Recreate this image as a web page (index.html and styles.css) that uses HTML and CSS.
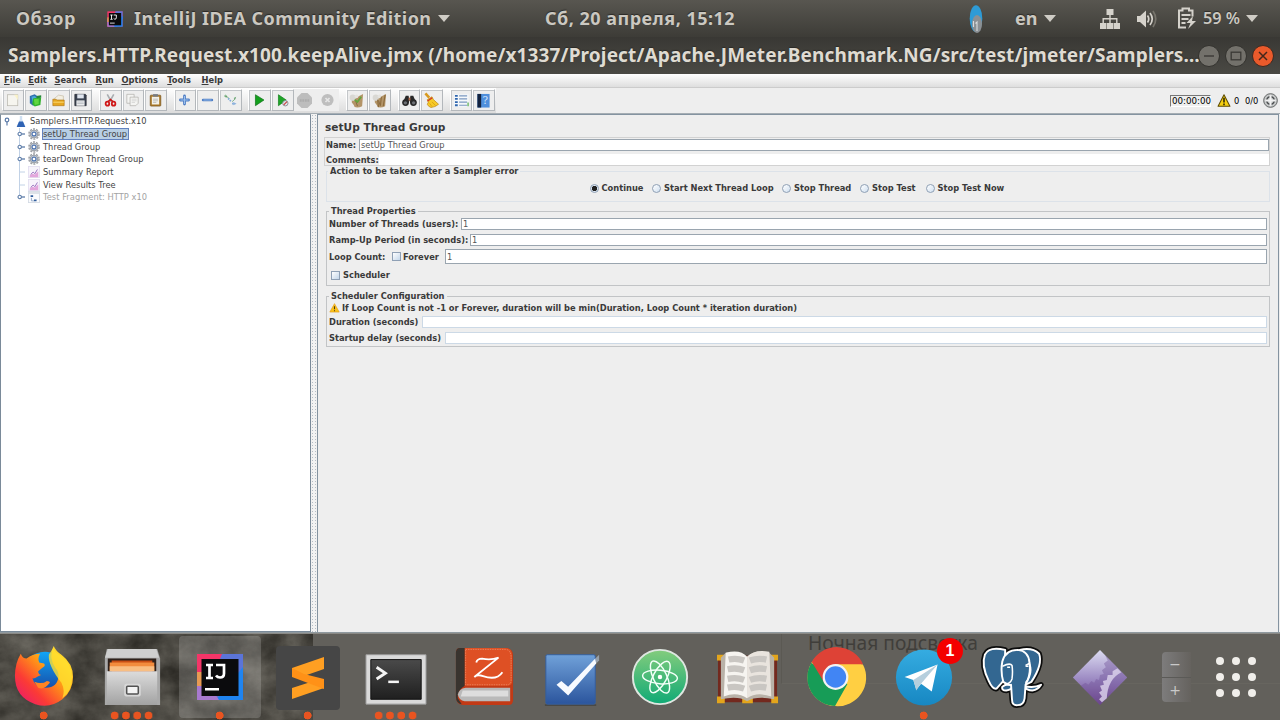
FILE: index.html
```html
<!DOCTYPE html>
<html lang="ru">
<head>
<meta charset="utf-8">
<title>Apache JMeter</title>
<link rel="stylesheet" href="styles.css">
</head>
<body>
<header class="shell">
  <div class="topbar">
    <span class="overview">Обзор</span>
    <svg class="app-ico" viewBox="0 0 48 48"><use href="#ij"/></svg>
    <span class="app-name">IntelliJ IDEA Community Edition</span>
    <i class="caret"></i>
    <span class="clock">Сб, 20 апреля, 15:12</span>
    <svg class="pill" viewBox="0 0 14 28"><ellipse cx="7" cy="13.5" rx="6.3" ry="13.3" fill="#2e9bd6"/><ellipse cx="8" cy="19" rx="5" ry="9" fill="#8b9094"/><path d="M4.500 22V16M8 26V17l-1.500 1.500" stroke="#d9dcdd" stroke-width="1.100" fill="none"/></svg>
    <span class="lang">en</span>
    <i class="caret c2"></i>
    <svg class="net" viewBox="0 0 20 20"><g fill="#d5d2cb"><path d="M6.500 0h7v6h-7zM0 14h6.500v6H0zM7 14h6v6H7zM13.500 14H20v6h-6.500zM9.300 6h1.400v3.500H9.300zM2.500 9h15v1.400h-15zM2.500 9h1.400v5H2.500zM9.300 9h1.400v5H9.300zM16.100 9h1.400v5h-1.400z"/></g></svg>
    <svg class="vol" viewBox="0 0 20 20"><path d="M0 7h3l6-5.500v17L3 13H0z" fill="#d5d2cb"/><g fill="none" stroke="#d5d2cb" stroke-width="1.700"><path d="M10.500 6.500q2.500 3.500 0 7"/><path d="M13 4q4.500 6 0 12"/><path d="M16 2q5.500 8 0 16" stroke="#77746c"/></g></svg>
    <svg class="bat" viewBox="0 0 20 22"><path d="M15.500 9.500V3.500H12V1.500H5.500v2H2v17h7" fill="none" stroke="#d5d2cb" stroke-width="2"/><path d="M4.500 7h9v2h-9zM4.500 11h7v2h-7zM4.500 15h4v2h-4z" fill="#d5d2cb"/><path d="M16 9l-6.500 7h4l-2.500 6 8-8h-4z" fill="#d5d2cb"/></svg>
    <span class="pct">59 %</span>
    <i class="caret c3"></i>
  </div>
  <div class="titlebar">
    <span class="wtitle">Samplers.HTTP.Request.x100.keepAlive.jmx (/home/x1337/Project/Apache.JMeter.Benchmark.NG/src/test/jmeter/Samplers…</span>
    <div class="wbtns">
      <svg viewBox="0 0 22 22"><circle cx="11" cy="11" r="10.500" fill="#73716b" stroke="#33322e"/><path d="M6 11h10" stroke="#3a3935" stroke-width="1.400"/></svg>
      <svg viewBox="0 0 22 22"><circle cx="11" cy="11" r="10.500" fill="#73716b" stroke="#33322e"/><rect x="6.200" y="7.200" width="9.600" height="7.600" fill="none" stroke="#3a3935" stroke-width="1.300"/></svg>
      <svg viewBox="0 0 22 22"><circle cx="11" cy="11" r="10.500" fill="#ea5a2b" stroke="#3b2a22"/><path d="M7 7l8 8M15 7l-8 8" stroke="#43261b" stroke-width="1.500"/></svg>
    </div>
  </div>
</header>

<nav class="menubar">
  <span><u>F</u>ile</span><span><u>E</u>dit</span><span><u>S</u>earch</span><span><u>R</u>un</span><span><u>O</u>ptions</span><span><u>T</u>ools</span><span><u>H</u>elp</span>
</nav>

<div class="toolbar">
  <div class="tools">
    <div class="grp">
      <b><svg viewBox="0 0 16 16"><rect x="2" y="1.500" width="12.500" height="13.500" fill="#f6f5ef" stroke="#b9b7ae" stroke-width=".9"/><path d="M10 1.500h4.500V8z" fill="#fbf3c8"/></svg></b>
      <b><svg viewBox="0 0 16 16"><path d="M1 3l6-2 3 2v10l-5 2-4-3z" fill="#2f6fae"/><path d="M3 4l4-1 2 2v7l-4 1z" fill="#49a8d8"/><path d="M5 6l6-1 4 0-1 9-7 2-3-3z" fill="#31b22c"/><path d="M6 7l6-1v7l-5 1z" fill="#5fd63f"/><path d="M9 3l6-1v3l-5 1z" fill="#24873a"/></svg></b>
      <b><svg viewBox="0 0 16 16"><path d="M3 6l5-4 6 1v6H3z" fill="#f3efe2" stroke="#b5a88a" stroke-width=".6"/><path d="M1 7h4l1 1h9v7H1z" fill="#e6a721" stroke="#a76d10" stroke-width=".7"/><path d="M1.500 10h13v1.500h-13z" fill="#f6cf62"/></svg></b>
      <b><svg viewBox="0 0 16 16"><path d="M1 1h13l1 1v13H1z" fill="#3a4250" stroke="#20242c" stroke-width=".8"/><path d="M4 1h8v5H4z" fill="#dfe5ee"/><path d="M3 8.500h10V15H3z" fill="#f2f3f4"/><path d="M4 10.500h8M4 12.500h8" stroke="#9aa0a8" stroke-width=".8"/></svg></b>
    </div>
    <div class="grp">
      <b><svg viewBox="0 0 16 16"><path d="M4 1l5 9M12 1L7 10" stroke="#a9adb1" stroke-width="2"/><g fill="none" stroke="#d01818" stroke-width="2.200"><ellipse cx="4.200" cy="12.500" rx="2.200" ry="2.500"/><ellipse cx="11.800" cy="12.500" rx="2.200" ry="2.500"/></g><path d="M5 10l3-2.500L11 10" stroke="#c81616" stroke-width="2" fill="none"/></svg></b>
      <b><svg viewBox="0 0 16 16"><g fill="#f4f4f2" stroke="#aaa9a4" stroke-width=".8"><path d="M1 1h9v11H1z"/><path d="M5 4.500h10V12l-3 3H5z"/></g><path d="M7 7h6M7 9h6M7 11h4" stroke="#c4c4c4" stroke-width=".7"/></svg></b>
      <b><svg viewBox="0 0 16 16"><rect x="1.500" y="2" width="13" height="13.500" rx="1" fill="#ad7c2b" stroke="#704c14" stroke-width=".8"/><path d="M3.500 4h9v9.500h-9z" fill="#f3f1e9"/><rect x="5" y=".8" width="6" height="3" fill="#777b82"/><path d="M5 7h6M5 9h6M5 11h4" stroke="#a7a7a7" stroke-width=".8"/></svg></b>
    </div>
    <div class="grp">
      <b><svg viewBox="0 0 16 16"><path d="M8 3v10M3 8h10" stroke="#4d7cc4" stroke-width="3.400" stroke-linecap="round"/><path d="M8 3v10M3 8h10" stroke="#9cc0ec" stroke-width="1.300"/></svg></b>
      <b><svg viewBox="0 0 16 16"><path d="M2.500 8h11" stroke="#4d7cc4" stroke-width="3" stroke-linecap="round"/><path d="M3 8h10" stroke="#9cc0ec" stroke-width="1.100"/></svg></b>
      <b><svg viewBox="0 0 16 16"><path d="M0 3l3 .5M3.500 3.500l3 3M10 10l4-3.500" stroke="#7fb085" stroke-width="1.200"/><path d="M2 1l2.500 4-3-.5zM15 4l-3 1.500 1.500 2z" fill="#5f9f68"/><path d="M5 6l4 4M10 12.500h3" stroke="#7ba6da" stroke-width="2" stroke-dasharray="2 1"/><path d="M11.500 10.500l4 2-4 2z" fill="#8cb2dd"/></svg></b>
    </div>
    <div class="grp">
      <b><svg viewBox="0 0 16 16"><path d="M3 1.500L13.500 8 3 15z" fill="#13a01c" stroke="#0b6c14" stroke-width=".8"/></svg></b>
      <b><svg viewBox="0 0 16 16"><path d="M3 1.500L12.500 8 3 15z" fill="#1fa428" stroke="#0b7c14" stroke-width=".8"/><circle cx="11.500" cy="12" r="3.300" fill="#dfe3e8" stroke="#7d8289"/><path d="M9.500 14l4-4" stroke="#c33" stroke-width="1.300"/></svg></b>
      <b class="off"><svg class="wide" viewBox="0 0 16 16"><path d="M4.800 0h6.400L16 4.800v6.400L11.200 16H4.800L0 11.200V4.800z" fill="#bdbdbd"/><path d="M3 8h10" stroke="#acacac" stroke-width="2.500" stroke-dasharray="2 .7"/></svg></b>
      <b class="off"><svg viewBox="0 0 16 16"><circle cx="8" cy="8" r="7.500" fill="#bebebe"/><path d="M5.500 5.500l5 5M10.500 5.500l-5 5" stroke="#e6e6e6" stroke-width="2"/></svg></b>
    </div>
    <div class="grp">
      <b><svg class="wide" viewBox="0 0 16 16"><use href="#broom"/><path d="M6 7l3 2.500L13 4" stroke="#63a53c" stroke-width="1.800" fill="none"/></svg></b>
      <b><svg class="wide" viewBox="0 0 16 16"><use href="#broom"/><path d="M6 7l1 8M10 4l-1 9M14 2l-2 12" stroke="#8c6b3b" stroke-width="1.200"/></svg></b>
    </div>
    <div class="grp">
      <b><svg class="wide" viewBox="0 0 16 16"><g fill="#292929"><path d="M4 3h3l1 5-1 2H1z"/><path d="M12 3H9L8 8l1 2h6z"/><circle cx="3.800" cy="10.200" r="3.600"/><circle cx="12.200" cy="10.200" r="3.600"/></g><g fill="#6d7075"><circle cx="3.600" cy="10.500" r="1.800"/><circle cx="12.400" cy="10.500" r="1.800"/></g><path d="M7 5h2v3H7z" fill="#b06a4c"/></svg></b>
      <b><svg class="wide" viewBox="0 0 16 16"><path d="M1.500 .5L5.500 5" stroke="#d89a1f" stroke-width="2.800"/><path d="M3.500 7l5-3 1.500 3 5.500 5q-3 3-8 3.500-3-1-4-3.500l1-2z" fill="#f7ca27" stroke="#b78210" stroke-width=".7"/><path d="M3.800 8.500l5-3.500" stroke="#d2332b" stroke-width="1.400"/><path d="M6 11l2.500 3.500M8.500 9.500l4 4" stroke="#d49a12" stroke-width=".8"/></svg></b>
    </div>
    <div class="grp">
      <b><svg class="wide" viewBox="0 0 16 16"><path d="M0 1.500h15.500v13H0z" fill="#f5f8fb"/><path d="M1 3h3M1 6.300h3M1 9.700h3M1 13h3" stroke="#2f66ae" stroke-width="2"/><path d="M5.500 3H14M5.500 6.300H14M5.500 9.700H14M5.500 13H14" stroke="#7b97c0" stroke-width="1.200"/><path d="M15 10v4" stroke="#49a841" stroke-width="1.200"/></svg></b>
      <b><svg class="wide" viewBox="0 0 16 16"><path d="M1.500 1h13v14.500h-13z" fill="#4f8fdc"/><path d="M1.500 1h4v14.500h-4z" fill="#14233f"/><text x="10" y="12" class="q">?</text></svg></b>
    </div>
  </div>
  <div class="status">
    <span class="timer">00:00:00</span>
    <svg class="warn" viewBox="0 0 16 16"><use href="#warn"/></svg>
    <span class="s0">0</span><span class="s1">0/0</span>
    <svg class="cross" viewBox="0 0 16 16"><circle cx="8" cy="8" r="7.300" fill="#c4c6c6" stroke="#5e6161"/><circle cx="8" cy="8" r="4" fill="none" stroke="#4c4f51" stroke-width="1.600"/><path d="M8 2.500v11M2.500 8h11" stroke="#f2f2f2" stroke-width="2.200"/></svg>
  </div>
</div>

<main class="work">
  <aside class="tree">
    <div class="row root"><svg class="hnd" viewBox="0 0 8 12"><circle cx="4" cy="5" r="1.800" fill="#fff" stroke="#5b7ba8" stroke-width="1.200"/><path d="M4 7v3.500" stroke="#5b7ba8" stroke-width="1.200"/></svg><svg class="ti" viewBox="0 0 12 12"><path d="M4.800 1h2.400v3.500L10 11H2l2.800-6.500z" fill="#cfe0f2"/><path d="M4 6.500h4L10.300 12H1.700z" fill="#2f63b4"/></svg><span>Samplers.HTTP.Request.x10</span></div>
    <div class="row"><svg class="hnd"><use href="#hnd"/></svg><svg class="ti" viewBox="0 0 14 14"><use href="#gear"/></svg><span class="sel">setUp Thread Group</span></div>
    <div class="row"><svg class="hnd"><use href="#hnd"/></svg><svg class="ti" viewBox="0 0 14 14"><use href="#gear"/></svg><span>Thread Group</span></div>
    <div class="row"><svg class="hnd"><use href="#hnd"/></svg><svg class="ti" viewBox="0 0 14 14"><use href="#gear"/></svg><span>tearDown Thread Group</span></div>
    <div class="row"><svg class="hnd"><use href="#leaf"/></svg><svg class="ti" viewBox="0 0 14 14"><use href="#chart"/></svg><span>Summary Report</span></div>
    <div class="row"><svg class="hnd"><use href="#leaf"/></svg><svg class="ti" viewBox="0 0 14 14"><use href="#chart"/></svg><span>View Results Tree</span></div>
    <div class="row last"><svg class="hnd"><use href="#hnd"/></svg><svg class="ti" viewBox="0 0 14 14"><rect x=".5" y=".5" width="13" height="13" fill="#fafbfd" stroke="#d3dae4"/><path d="M1 1h12v2.500H1z" fill="#dde2e8"/><path d="M3 5h3v2H3zM7 10h3v2H7z" fill="#315e9d"/><path d="M4 8v3.500h3" stroke="#8ba3c4" fill="none"/></svg><span class="dis">Test Fragment: HTTP x10</span></div>
  </aside>
  <div class="split"></div>
  <section class="form">
    <h1>setUp Thread Group</h1>
    <div class="namebox">
      <div class="line nm"><label>Name:</label><div class="inp">setUp Thread Group</div></div>
      <div class="line cm"><label>Comments:</label><div class="plain"></div></div>
    </div>
    <fieldset class="action"><legend>Action to be taken after a Sampler error</legend>
      <div class="radios">
        <span><i class="on"></i>Continue</span><span><i></i>Start Next Thread Loop</span><span><i></i>Stop Thread</span><span><i></i>Stop Test</span><span><i></i>Stop Test Now</span>
      </div>
    </fieldset>
    <fieldset class="props"><legend>Thread Properties</legend>
      <div class="line p1"><label>Number of Threads (users):</label><div class="inp">1</div></div>
      <div class="line p2"><label>Ramp-Up Period (in seconds):</label><div class="inp">1</div></div>
      <div class="line p3"><label>Loop Count:</label><i class="chk"></i><label class="fv">Forever</label><div class="inp">1</div></div>
      <div class="line p4"><i class="chk"></i><label>Scheduler</label></div>
    </fieldset>
    <fieldset class="sched"><legend>Scheduler Configuration</legend>
      <div class="line w"><svg viewBox="0 0 16 16"><path d="M8 1l7.500 13.500H.5z" fill="#fbc319" stroke="#e59a10" stroke-linejoin="round"/><path d="M8 5v5M8 11.500v1.700" stroke="#4b3a10" stroke-width="1.700"/></svg><label>If Loop Count is not -1 or Forever, duration will be min(Duration, Loop Count * iteration duration)</label></div>
      <div class="line d"><label>Duration (seconds)</label><div class="inp lite"></div></div>
      <div class="line st"><label>Startup delay (seconds)</label><div class="inp lite"></div></div>
    </fieldset>
  </section>
</main>

<footer class="dock">
  <svg class="rock" viewBox="0 0 313 87" preserveAspectRatio="none"><filter id="rk" x="0" y="0" width="100%" height="100%" color-interpolation-filters="sRGB"><feTurbulence type="fractalNoise" baseFrequency=".03 .035" numOctaves="6" seed="8"/><feColorMatrix values=".34 0 0 0 .125  .335 0 0 0 .118  .32 0 0 0 .1  0 0 0 0 1"/></filter><rect width="313" height="87" filter="url(#rk)"/></svg>
  <div class="behind"><span>Ночная подсветка</span></div>
  <div class="apps">
    <div class="app"><svg viewBox="0 0 64 64"><defs><linearGradient id="ff" x1="1" y1="0" x2="0" y2="1"><stop offset=".1" stop-color="#ffe92f"/><stop offset=".42" stop-color="#ff9a16"/><stop offset=".7" stop-color="#fb3b35"/><stop offset="1" stop-color="#e4127c"/></linearGradient><linearGradient id="fb" x1="0" y1="0" x2="0" y2="1"><stop offset="0" stop-color="#10a5f5"/><stop offset="1" stop-color="#183795"/></linearGradient></defs><circle cx="33" cy="30" r="24" fill="url(#fb)"/><path d="M8 8q2 5 6 5 6-5 14-5-3 5-1 9l5 1q2 2-1 4l-5 4q0 3 3 4-3 1-6 3-3 1-3 0 2 9 12 10 14 1 15-12 0-5-3-8Q36 11 42 0q2 5 8 9 12 9 12 23 0 14-11 23-13 10-28 5Q2 53 2 31 2 18 8 8z" fill="url(#ff)"/><path d="M42 1q0 5 7 9 12 9 12 22 0 15-10 22 3-8-1-16Q36 20 37 9z" fill="#ffe02f" opacity=".8"/><path d="M22 37q8 3 13-1 3 0 3 2-6 8-12 5z" fill="#ff8423"/></svg><em class="n1"></em></div>
    <div class="app"><svg viewBox="0 0 64 64"><defs><linearGradient id="cab" x1="0" y1="0" x2="0" y2="1"><stop offset="0" stop-color="#dcdcdc"/><stop offset="1" stop-color="#a2a2a2"/></linearGradient></defs><path d="M6 3h52l3 10v48H4V13z" fill="#a9a9a9"/><path d="M7 3h50l3 9H4z" fill="#cfcfcf"/><path d="M7 13h50v14H7z" fill="#2e211b"/><path d="M11 15h42v12H11z" fill="#c94f15"/><path d="M9 17h46v9H9z" fill="#f28c3d"/><path d="M9 21h46v5H9z" fill="#f8be83"/><path d="M6 26h52v35H6z" fill="url(#cab)"/><rect x="24" y="39" width="17" height="13" rx="2" fill="#d8d8d8"/><rect x="26.500" y="41.500" width="12" height="8" rx="1" fill="#f3f3f3" stroke="#525252" stroke-width="1.600"/></svg><em class="n4"></em></div>
    <div class="app active"><svg class="s48" viewBox="0 0 48 48"><g id="ij"><path d="M1 1h46v46H1z" fill="#f43568"/><path d="M26 1h21v22L30 47H7z" fill="#5b74d8"/><path d="M47 14v33H20z" fill="#1f84f0"/><path d="M1 25h8l14 22H1z" fill="#a879cf"/><path d="M1 19h6v14H1z" fill="#e79a53"/><path d="M5.500 6h37v37h-37z" fill="#0b0b0d"/><path d="M10 12h7M13.500 12v12M10 25h7M20 12h8v8.500q0 4-4 4-2.500 0-4-2" fill="none" stroke="#fff" stroke-width="2.700"/><path d="M9 35h14v2.500H9z" fill="#fff"/></g></svg><em class="n1"></em></div>
    <div class="app"><svg class="s64" viewBox="0 0 64 64"><rect width="64" height="64" rx="4" fill="#464646"/><path d="M16 22l32-11v12l-20 7-12-1z" fill="#ff9f22"/><path d="M16 42v11l32-11v-9l-4 0z" fill="#ff9f22"/><path d="M16 22v9l32 12v-10L28 28z" fill="#ff9117"/></svg><em class="n1"></em></div>
    <div class="app"><svg viewBox="0 0 64 64"><defs><linearGradient id="trm" x1="0" y1="0" x2="0" y2="1"><stop offset="0" stop-color="#4a4a4a"/><stop offset="1" stop-color="#1f1f1f"/></linearGradient></defs><path d="M1 9h62v51H1z" fill="#dadada" stroke="#9a9a9a"/><path d="M6 14h52v41H6z" fill="url(#trm)" stroke="#111"/><path d="M12 22l9 6-9 6" fill="none" stroke="#f5f5f5" stroke-width="3"/><path d="M24 37h11" stroke="#f5f5f5" stroke-width="2.600"/></svg><em class="n4"></em></div>
    <div class="app"><svg viewBox="0 0 64 64"><path d="M7 2h47q8 0 8 8v46q0 5-5 5H10q-7-1-7-9V7q0-5 4-5z" fill="#c23a16"/><path d="M12 2h42q7 0 7 8v26q0 5-5 5H12z" fill="#de5024"/><path d="M7 2h5v39q-8 5-7 13l4 6Q3 59 3 52V7q0-5 4-5z" fill="#39342f"/><path d="M13 43h46v14H12q-6-1-7-7 1-6 8-7z" fill="#b9b9b9"/><path d="M10 46h47v6H8z" fill="#ececec" opacity=".7"/><path d="M13 3.500h41q5 0 6 7v25q0 4-4 4.500H13z" fill="none" stroke="#f3a07d" stroke-width=".6" stroke-dasharray="1.500 1"/><path d="M24 17q1-4 6-4 9 2 17-1L22 32q3-3 9-1 14 5 20-4" fill="none" stroke="#fff" stroke-width="1.900"/></svg></div>
    <div class="app"><svg viewBox="0 0 64 64"><defs><linearGradient id="tk" x1="0" y1="0" x2="0" y2="1"><stop offset="0" stop-color="#70a1d9"/><stop offset="1" stop-color="#2b559d"/></linearGradient></defs><path d="M4 60h53v2H4z" fill="#4a4946"/><rect x="5" y="9" width="51" height="51" rx="1.500" fill="url(#tk)" stroke="#355e9d"/><path d="M16 40l5-4 7 6L56 13l1 5-29 33z" fill="#f7faff"/><path d="M56 13l4-4v6l-3 3z" fill="#b9c9de" opacity=".6"/></svg></div>
    <div class="app"><svg viewBox="0 0 64 64"><defs><linearGradient id="at" x1="0" y1="0" x2="0" y2="1"><stop offset="0" stop-color="#83cc7d"/><stop offset="1" stop-color="#10aa75"/></linearGradient></defs><circle cx="32" cy="32" r="28" fill="url(#at)" stroke="#dfe7e1" stroke-width="2"/><g fill="none" stroke="#f2fff8" stroke-width="1.500"><ellipse cx="32" cy="32" rx="18" ry="7" transform="rotate(5 32 32)"/><ellipse cx="32" cy="32" rx="18" ry="7" transform="rotate(65 32 32)"/><ellipse cx="32" cy="32" rx="18" ry="7" transform="rotate(118 32 32)"/></g><circle cx="32" cy="32" r="2.300" fill="#fff"/></svg></div>
    <div class="app"><svg viewBox="0 0 64 64"><path d="M1 10h61v48H1z" fill="#73291e"/><g fill="#e3a51c"><path d="M0 9h8v6H0zM56 9h7v6h-7zM0 52h8v7H0zM56 52h7v7h-7zM26 54h11v5H26z"/></g><path d="M4 12l5-5q14-3 22 4 9-8 23-4l5 5v43q-18-4-28 2-9-6-27-2z" fill="#b9b2a8"/><path d="M9 7q15-4 22 4v43Q21 47 7 52z" fill="#f6f4f0"/><path d="M54 6q-15-3-23 5v43q10-7 25-2z" fill="#e9e4de"/><g stroke="#c9c6c2" stroke-width="6.500"><path d="M12 14q8-2 16 1M11 24q9-2 17 1M11 34q9-2 17 1M11 43q9-2 17 1M34 15q8-3 17-1M34 25q8-3 17-1M34 35q8-3 17-1M34 44q8-3 17-1" fill="none"/></g></svg></div>
    <div class="app"><svg viewBox="0 0 64 64"><circle cx="32" cy="32.500" r="29.500" fill="#ffcd40"/><path d="M32 32.500L6.500 17.500a29.500 29.500 0 0 0 25.500 44.500l13-22z" fill="#179c57"/><path d="M32 19h28A29.500 29.500 0 0 0 7 16.500L20 38z" fill="#de4236"/><path d="M59.800 19H32l12 20-13 23a29.500 29.500 0 0 0 28.800-43z" fill="#ffcf42"/><circle cx="31.500" cy="32" r="13.300" fill="#f3f3f3"/><circle cx="31.500" cy="32" r="11" fill="#4185f4"/></svg></div>
    <div class="app"><svg viewBox="0 0 64 64"><defs><linearGradient id="tg" x1="0" y1="0" x2="0" y2="1"><stop offset="0" stop-color="#35ace1"/><stop offset="1" stop-color="#1787c2"/></linearGradient></defs><circle cx="32" cy="32.500" r="29" fill="url(#tg)"/><path d="M12 32l34-13-6 28-11-8-5 6-3-10z" fill="#fff"/><path d="M21 35l25-16-18 21-4 6z" fill="#b6cfdd"/></svg><strong>1</strong><em class="n1"></em></div>
    <div class="app"><svg viewBox="0 0 64 64"><defs><g id="eleph"><path d="M25 4Q8 0 4 9 0 20 8 36q4 9 8 8l8-9z"/><path d="M40 4q13-3 20 4 4 11-8 29l-6 3z"/><path d="M22 42q5-4 11-1-1 4-7 5-5 0-4-4zM44 41q10 3 18-1-3 5-9 6-6 0-9-5z"/><path d="M22 16q3-12 16-12 11 1 12 13 2 12-4 23l-1 14q-1 7-7 7-6 1-6-6l-1-15q-2 1-8-3-3-10-1-21z"/></g></defs><use href="#eleph" fill="#0c0c0c" stroke="#0c0c0c" stroke-width="5.500" stroke-linejoin="round"/><use href="#eleph" fill="#336791" stroke="#fff" stroke-width="2" stroke-linejoin="round"/><path d="M22 21q8-4 10-1 1 6 0 14-2 5-6 5M46 20l4-2q4 10-4 20" fill="none" stroke="#fff" stroke-width="1.600"/><path d="M27 22h3M46 21h3" stroke="#fff" stroke-width="1.600"/></svg></div>
    <div class="app"><svg viewBox="0 0 64 64"><defs><linearGradient id="dm" x1="0" y1="0" x2="0" y2="1"><stop offset="0" stop-color="#dcdcf2"/><stop offset=".55" stop-color="#9a87c1"/><stop offset="1" stop-color="#6a3f86"/></linearGradient></defs><path d="M32 4l28 28.500L32 61 4 32.500z" fill="url(#dm)"/><path d="M37 9L60 32.500 32 61 12 41l5-3 3 2 3-4 3 2 2-4 3 1 1-5 4-1-2-4 4-3-2-4 4-3z" fill="#6f5197" opacity=".4"/><path d="M50 23l4 4q-14 7-15 27l-5 4-3-3 3-3-3-4 3-2-2-5 4-1-1-4 4-1 1-5 5 0 0-4z" fill="#ddd5ee" opacity=".8"/></svg></div>
    <div class="pager"><span>−</span><span>+</span></div>
    <div class="grid9"><i></i><i></i><i></i><i></i><i></i><i></i><i></i><i></i><i></i></div>
  </div>
</footer>

<svg class="defs" aria-hidden="true">
  <defs>
    <g id="warn"><path d="M8 1l7.300 14H.7z" fill="#f5cf10" stroke="#5e4c05" stroke-width="1.300" stroke-linejoin="round"/><path d="M8 4.500v6M8 11.800v2" stroke="#332b08" stroke-width="2"/></g>
    <g id="hnd"><path d="M4 6h4" stroke="#5b7ba8" stroke-width="1.300"/><circle cx="2.700" cy="6" r="1.700" fill="#fff" stroke="#5b7ba8" stroke-width="1.100"/></g>
    <g id="leaf"><path d="M3 6h5" stroke="#c2d2e6" stroke-width="1"/></g>
    <g id="gear"><circle cx="7" cy="7" r="5.900" fill="none" stroke="#9c9fa4" stroke-width="1.700" stroke-dasharray="2.400 1.300"/><circle cx="7" cy="7" r="4.500" fill="#ccd2da" stroke="#888d95" stroke-width="1"/><circle cx="7" cy="7" r="2.300" fill="#fff" stroke="#4f75b0" stroke-width="1.400"/></g>
    <g id="chart"><rect x=".5" y=".5" width="13" height="13" fill="#f7f4fb" stroke="#e2dff0"/><path d="M2 13V11l3-2 3 1 4-4v7z" fill="#e3a6dc"/><path d="M3 10l3-3 2 2 3-5" fill="none" stroke="#8d62b8"/></g>
    <g id="broom"><path d="M3 4q3 1 6 0l4-2 2-1-1 13q-4 2-8 1-1-3-3-5z" fill="#b39468"/><circle cx="4" cy="5" r="3.300" fill="#d9d8d4"/><circle cx="8" cy="3.500" r="2" fill="#e4e3e0"/><path d="M7 8l2 6" stroke="#86683f"/></g>
  </defs>
</svg>
</body>
</html>
```
FILE: styles.css
```css
* { box-sizing: border-box; }
body {
  margin: 0; width: 1280px; height: 720px; overflow: hidden;
  display: flex; flex-direction: column;
  background: #eee; color: #3a3a3a;
  font: bold 8.3px/10px "DejaVu Sans", sans-serif;
}
svg { display: block; flex: none; overflow: visible; }
.defs { position: absolute; width: 0; height: 0; }
i, em, b { font-style: normal; flex: none; }

.shell { height: 74px; flex: none; font-family: "Noto Sans", sans-serif; color: #dfdbd2; text-shadow: 0 -1px 1px #2b2a27; }
.topbar {
  height: 37px; display: flex; align-items: center;
  background: linear-gradient(#585650, #3d3c37);
  font-size: 18px; font-weight: 700; line-height: 24px; white-space: nowrap; color: #cbc8c1;
}
.topbar > * { flex: none; }
.topbar > span { margin-top: -1px; }
.overview { width: 107px; padding-left: 16px; letter-spacing: .6px; }
.app-ico { width: 16px; height: 16px; }
.app-name { margin-left: 11px; width: 298px; letter-spacing: .44px; }
.caret { width: 0; height: 0; border: 6px solid transparent; border-top: 7px solid #cfccc5; border-bottom: 0; margin-left: 6px; }
.clock { margin-left: 95px; width: 192px; letter-spacing: .48px; }
.pill { width: 14px; height: 28px; margin-left: 232px; }
.lang { margin-left: 32px; width: 23px; }
.net { width: 20px; height: 20px; margin-left: 44px; }
.vol { width: 20px; height: 20px; margin-left: 17px; }
.bat { width: 20px; height: 22px; margin-left: 20px; margin-top: -2px; }
.pct { margin-left: 6px; width: 37px; font-size: 16.300px; font-weight: 600; }
.titlebar {
  height: 37px; display: flex; align-items: center; padding-left: 8px;
  background: linear-gradient(#393834, #4a4944);
}
.wtitle { flex: none; width: 1190px; margin-top: -1px; font-size: 19px; letter-spacing: .14px; font-weight: 700; line-height: 26px; white-space: nowrap; }
.wbtns { display: flex; gap: 5px; }
.wbtns svg { width: 22px; height: 22px; }

.menubar { height: 14px; flex: none; display: grid; grid-template-columns: 24.300px 26.200px 41px 26px 45.800px 34.300px auto; padding: 1px 0 0 4px; background: linear-gradient(#fff, #dedede); border-bottom: 1px solid #ccc; }
.menubar span { line-height: 11px; }
.menubar u { text-underline-offset: 1px; text-decoration-thickness: 1px; }

.toolbar { height: 26px; flex: none; display: flex; justify-content: space-between; border-bottom: 1px solid #a5adb3; }
.tools { display: flex; gap: 6.700px; padding: 1px 1px 2px 1.500px; background: linear-gradient(#fff, #dcdcdc); }
.grp { display: flex; background: #f6f6f6; }
.grp b { width: 22.680px; height: 22px; display: grid; place-items: center; background: #eee; border: 1px solid #fff; border-right-color: #b3b7bb; border-bottom-color: #b3b7bb; box-shadow: inset 1px 1px 0 #c4c7ca; }
.grp b.off { border-color: #eee; box-shadow: none; }
.grp svg { width: 13px; height: 14px; }
.grp svg.wide { width: 15px; height: 15px; }
.q { font: 11px "DejaVu Serif", serif; fill: #d9e9ff; text-anchor: middle; }
.status { display: flex; align-items: center; width: 110px; }
.timer { width: 41px; height: 12px; padding-left: 1px; border: 1px solid #777; border-right-color: #fff; border-bottom-color: #fff; font-size: 8.700px; font-weight: 400; color: #000; }
.warn { width: 14px; height: 13px; margin-left: 6px; }
.s0 { margin-left: 3px; width: 11px; font-weight: 400; color: #000; }
.s1 { width: 18px; font-weight: 400; color: #000; }
.cross { width: 15px; height: 15px; }

.work { height: 519px; flex: none; display: flex; border-bottom: 1px solid #8f999f; }
.tree { width: 311px; background: #fff; border: 1px solid #7a8a99; border-top-color: #a5adb3; font-weight: 400; color: #444; }
.row { height: 12.650px; display: flex; align-items: center; padding-left: 16px; white-space: nowrap; background: linear-gradient(#c2d2e6, #c2d2e6) 18px 0/1px 100% no-repeat; }
.row.root { padding-left: 2px; background: none; }
.row.last { background-size: 1px 50%; }
.hnd { width: 8px; height: 12px; }
.ti { width: 12px; height: 12px; margin-left: 3px; }
.root .ti { margin-left: 4px; }
.row span { padding: 0 1px 0 0; line-height: 10px; border: 1px solid transparent; margin-left: 2px; letter-spacing: .03px; }
.row.root span { margin-left: 2px; margin-top: -1px; }
.row .sel { background: #b8cfe5; border-color: #6382bf; }
.row .dis { color: #a3a3a3; }
.split { width: 6px; background: radial-gradient(circle, #b5bdc5 .6px, transparent .8px) 0 0/3px 3px, #f2f2f2; }
.form { width: 962px; border: 1px solid #8493a0; border-bottom: 0; padding: 6px 8px 0 7px; }
h1 { font: bold 10.600px/12px "DejaVu Sans", sans-serif; margin: 0; height: 16px; }
.line { display: flex; align-items: center; white-space: nowrap; }
.namebox { width: 946px; height: 29px; margin-left: -1px; border: 1px solid #d2d2d2; }
.nm { height: 14px; padding: 0 0 0 1px; }
.cm { height: 12px; padding-left: 1px; }
.inp { flex: 1; height: 12px; line-height: 10px; background: #fff; border: 1px solid #9aa5af; padding-left: 1px; font-weight: 400; color: #555; }
.inp.lite { border-color: #ccd9e6; }
.nm label { width: 33px; }
.cm label { width: 53px; padding-top: 3px; }
.plain { flex: 1; height: 11px; margin-top: 3px; background: #fff; }
fieldset { margin: 0 0 0 1px; padding: 0; width: 944px; border: 1px solid #c2c4c6; min-width: 0; }
legend { margin-left: 2px; padding: 0 2px; line-height: 10px; height: 10px; }
.action { height: 36px; border-color: #dce2e9; }
.action legend { margin-left: 1px; }
.radios { display: grid; grid-template-columns: 62.500px 130px 78px 65.500px auto; padding: 7px 0 0 262.500px; }
.radios span { display: flex; align-items: center; white-space: nowrap; gap: 3px; }
.radios i { width: 9px; height: 9px; border: 1px solid #8fa0b5; border-radius: 50%; background: linear-gradient(135deg, #fff, #cfdff0); }
.radios i.on { background: radial-gradient(circle, #222 2.300px, #dfe9f4 3px); }
.props { height: 80px; margin-top: 4px; }
.props .line, .sched .line { padding: 0 2px 0 2px; }
.props .p1 { height: 15px; padding-top: 1px; }
.p1 label { width: 132px; }
.p2 { height: 17px; }
.p2 label { width: 141px; }
.p3 { height: 17px; }
.p3 label { width: 63px; }
.p3 label.fv { width: 42px; margin-left: 2px; }
.p3 .inp { height: 15px; line-height: 14px; }
.chk { width: 9px; height: 9px; border: 1px solid #8fa0b5; background: linear-gradient(135deg, #fff, #c3d6ea); }
.props .p4 { height: 20px; gap: 3px; padding-left: 4px; }
.sched { height: 56px; margin-top: 5px; }
.w { height: 13px; }
.w svg { width: 11px; height: 10px; margin-right: 2px; }
.d { height: 16px; }
.d label { width: 93px; }
.st { height: 16px; }
.st label { width: 116px; }

.dock { flex: 1; position: relative; background: #62605b; overflow: hidden; border-top: 1px solid #8a8985; }
.rock { position: absolute; left: 0; top: 0; width: 313px; height: 87px; }
.behind { position: absolute; left: 781px; top: 0; width: 499px; height: 50px; border-left: 1px solid #5b5953; border-bottom: 1px solid #67655f; font: 400 19.200px/20px "Noto Sans", sans-serif; color: #403e3a; }
.behind span { position: absolute; left: 26px; top: -1px; white-space: nowrap; }
.apps { position: relative; display: flex; height: 87px; }
.app { width: 88px; position: relative; display: flex; flex: none; justify-content: center; padding-top: 12px; }
.app svg { width: 62px; height: 62px; }
.app svg.s48 { width: 48px; height: 48px; margin-top: 7px; }
.app svg.s64 { width: 64px; height: 64px; }
.app.active::before { content: ""; position: absolute; left: 3px; top: 2px; width: 82px; height: 82px; border-radius: 4px; background: rgba(255, 255, 255, .17); }
.app.active svg { position: relative; }
.app em { position: absolute; bottom: 1px; height: 9px; background: radial-gradient(circle, #e95420 3.700px, transparent 4.200px) 0 0/11.300px 9px; }
.n1 { left: 38.400px; width: 11.300px; }
.n4 { left: 21.400px; width: 45.200px; }
.app strong { position: absolute; left: 57px; top: 4px; width: 26px; height: 26px; border-radius: 50%; background: #f40000; color: #fff; font: bold 16px/26px "Liberation Sans", sans-serif; text-align: center; }
.pager { position: absolute; left: 1162px; top: 18px; width: 29px; height: 50px; display: grid; grid-template-rows: 25px 25px; border-radius: 4px 0 0 4px; background: linear-gradient(90deg, #7d7c7c, #65625e); color: #c9c9c9; font: 400 14px/25px "DejaVu Sans", sans-serif; text-align: center; }
.pager span + span { border-top: 1px solid #5b5a57; }
.pager span { padding-right: 3px; }
.grid9 { position: absolute; left: 1216px; top: 23px; display: grid; grid-template-columns: repeat(3, 8px); gap: 8px; }
.grid9 i { width: 8px; height: 8px; border-radius: 50%; background: #f0eeea; }
```
